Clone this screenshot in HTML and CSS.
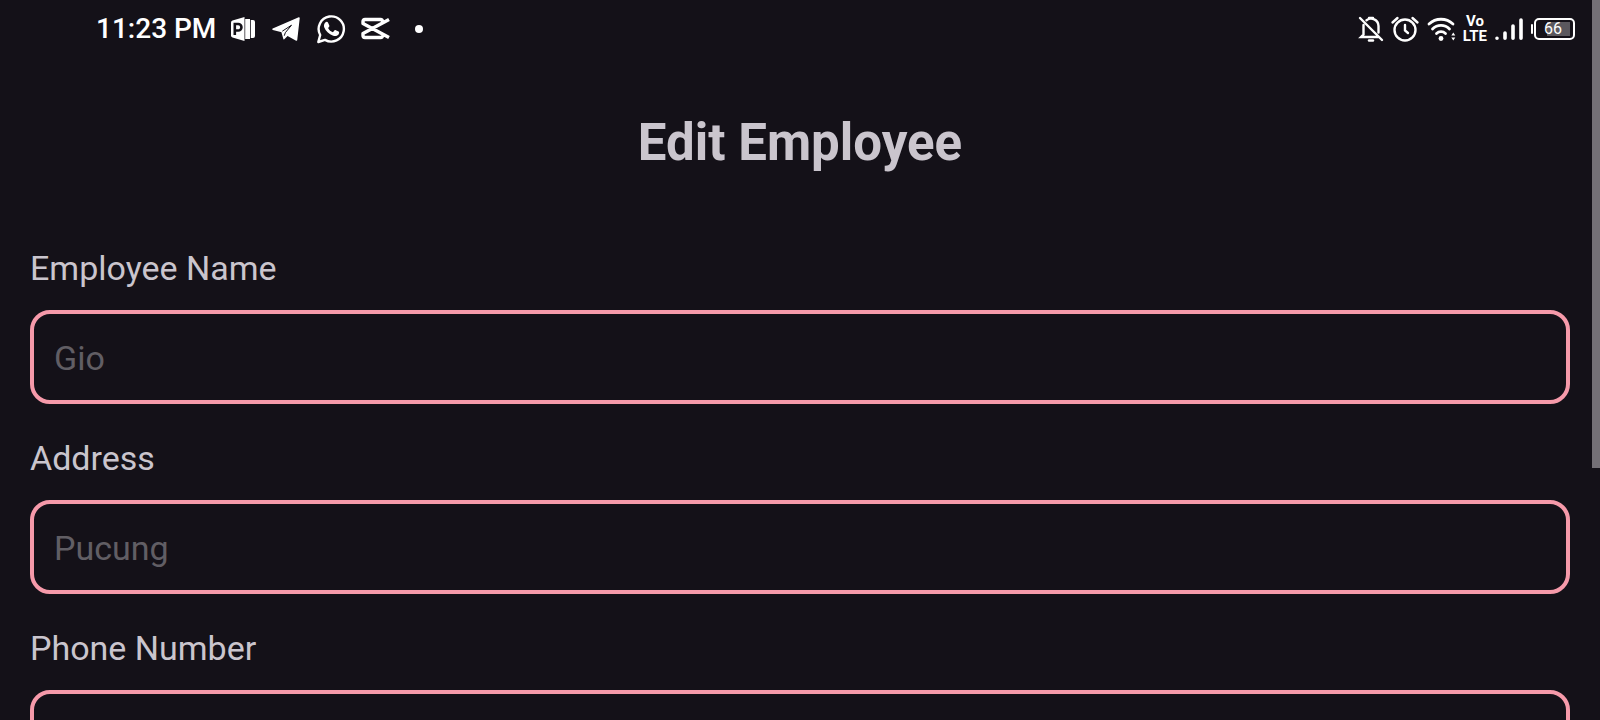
FILE: index.html
```html
<!DOCTYPE html>
<html lang="en">
<head>
<meta charset="utf-8">
<meta name="viewport" content="width=device-width, initial-scale=1">
<title>Edit Employee</title>
<link rel="stylesheet" href="styles.css">
</head>
<body>
<div class="screen">
  <header class="status-bar">
    <div class="status-left">
      <time class="clock">11:23 PM</time>
      <div class="notifications">
        <svg width="26" height="26" viewBox="0 0 26 26" aria-hidden="true">
          <path fill="#fff" d="M2.500 4.500 14.500 1v24l-12-3.500Q1 21 1 19.500v-13Q1 5 2.500 4.500z"/>
          <path fill="#fff" d="M15.200 3h4.800v20h-4.800zM20.800 4H23q2 0 2 2v14q0 2-2 2h-2.200z"/>
          <path fill="none" stroke="#141118" stroke-width="2.600" d="M4.800 19V8h3.400a3 3 0 0 1 0 6.500H5"/>
        </svg>
        <svg width="30" height="26" viewBox="0 0 30 26" aria-hidden="true">
          <path fill="#fff" stroke="#fff" stroke-width="1.500" stroke-linejoin="round" d="M2 13.200 28 2l-2.500 22-9-5-3.500 3.600-2-7z"/>
          <path fill="none" stroke="#141118" stroke-width="1" d="m11.300 15.200 9.200-6-6.200 7.500-1 3"/>
        </svg>
        <svg width="30" height="30" viewBox="0 0 30 30" aria-hidden="true">
          <path fill="none" stroke="#fff" stroke-width="2.400" stroke-linejoin="round" d="m2.300 28 1.900-7A12.600 12.600 0 1 1 9 25.900z"/>
          <path fill="#fff" d="M9.300 8.500c.9-1 2.300-.9 2.800.2l1.200 2.700c.3.800-.2 1.500-1.200 2.500 1.100 2.100 2.700 3.500 4.800 4.300l1.500-1.700c.4-.5.900-.5 1.400-.3l2.800 1.400c.8.400.6 1.700.1 2.600-1 1.700-3.400 2.200-5.500 1.500-4.500-1.500-7.500-4.500-9-8.400-.6-1.800-.1-3.700 1.100-4.800z"/>
        </svg>
        <svg width="30" height="26" viewBox="0 0 30 26" aria-hidden="true">
          <path fill="none" stroke="#fff" stroke-width="3.400" stroke-linejoin="round" d="M21.500 6.500V5.500q0-2-2-2H4q-2 0-2 2v2L28 21.500M28 3.500 2 17.500v2q0 2 2 2h15.500q2 0 2-2v-1"/>
        </svg>
        <svg width="8" height="8" viewBox="0 0 8 8" aria-hidden="true"><circle cx="4" cy="4" r="4" fill="#fff"/></svg>
      </div>
    </div>
    <div class="status-right">
      <div class="alerts">
        <svg width="26" height="28" viewBox="0 0 26 28" fill="none" stroke="#fff" stroke-width="2.400" stroke-linecap="round" aria-hidden="true">
          <path d="m2 3 22 22M5.500 10v9.500L3 22h17.500M8.500 5.200A7.500 7.500 0 0 1 20.500 11v6.500M11 3h4"/>
          <path d="M11 25.500h4"/>
        </svg>
        <svg width="30" height="28" viewBox="0 0 30 28" fill="none" stroke="#fff" stroke-width="2.400" stroke-linecap="round" aria-hidden="true">
          <circle cx="15" cy="15" r="10.500"/><path d="M15 10v5.500l3 2.500M2.500 7.500l5-4.500M27.500 7.500l-5-4.500"/>
        </svg>
        <svg width="30" height="28" viewBox="0 0 30 28" fill="none" stroke="#fff" stroke-width="2.800" stroke-linecap="round" aria-hidden="true">
          <path d="M3 9a17.500 17.500 0 0 1 24 0M6.500 14a12 12 0 0 1 17 0M10.500 18.500a6.500 6.500 0 0 1 9 0"/>
          <circle cx="15" cy="23.500" r="2.400" fill="#fff" stroke="none"/>
          <path fill="#fff" stroke="none" d="m25.300 20.500 2-3 2 3zM25.300 22.500h4l-2 3z"/>
        </svg>
      </div>
      <span class="volte"><span>Vo</span><span>LTE</span></span>
      <svg width="30" height="24" viewBox="0 0 30 24" stroke="#fff" stroke-width="3.600" stroke-linecap="round" aria-hidden="true">
        <path d="M3 21.200v.1M11 21.200V16M19 21.200V9M27 21.200V3"/>
      </svg>
      <span class="battery"><span class="battery-cap"></span><span class="battery-body">66</span></span>
    </div>
  </header>

  <main class="content">
    <h1 class="title">Edit Employee</h1>
    <form class="form">
      <div class="field">
        <label class="label" for="name">Employee Name</label>
        <input class="input" id="name" type="text" placeholder="Gio">
      </div>
      <div class="field">
        <label class="label" for="address">Address</label>
        <input class="input" id="address" type="text" placeholder="Pucung">
      </div>
      <div class="field">
        <label class="label" for="phone">Phone Number</label>
        <input class="input" id="phone" type="tel">
      </div>
    </form>
  </main>
  <div class="scroll-thumb"></div>
</div>
</body>
</html>
```
FILE: styles.css
```css
* {
  box-sizing: border-box;
}

body {
  margin: 0;
  background: #141118;
  color: #cac5cd;
  font-family: Roboto, "Noto Sans", sans-serif;
}

.screen {
  position: relative;
  height: 100vh;
  overflow: hidden;
}

.status-bar {
  display: flex;
  justify-content: space-between;
  align-items: center;
  height: 58px;
  padding: 0 25px 0 96px;
  color: #fff;
}

.status-left,
.notifications,
.status-right,
.alerts,
.battery {
  display: flex;
  align-items: center;
}

.status-left {
  gap: 14px;
}

.clock {
  font-size: 28px;
  font-weight: 500;
  line-height: 32px;
}

.notifications {
  gap: 15px;
}

.notifications svg:last-child {
  margin-left: 9px;
}

.alerts {
  gap: 6px;
}

.status-right {
  gap: 7px;
}

.volte {
  display: flex;
  flex-direction: column;
  align-items: center;
  font-size: 15px;
  font-weight: 700;
  line-height: 15px;
}

.battery {
  gap: 1px;
}

.battery-cap {
  width: 2px;
  height: 10px;
  border-radius: 1px;
  background: #fff;
}

.battery-body {
  width: 41px;
  height: 22px;
  padding-right: 3px;
  border: 2px solid #fff;
  border-radius: 5px;
  background: linear-gradient(to left, transparent 3px, #5b585e 3px 26px, transparent 26px);
  background-size: 100% 14px;
  background-position: center;
  background-repeat: no-repeat;
  font-size: 16px;
  line-height: 18px;
  text-align: center;
}

.content {
  padding: 55px 30px 0;
}

.title {
  margin: 0;
  font-size: 51px;
  font-weight: 700;
  line-height: 60px;
  text-align: center;
}

.form {
  display: flex;
  flex-direction: column;
  gap: 34px;
  margin-top: 75px;
}

.field {
  display: flex;
  flex-direction: column;
  gap: 22px;
}

.label {
  font-size: 34px;
  line-height: 40px;
}

.input {
  width: 100%;
  height: 94px;
  padding: 2px 20px 0;
  border: 4px solid #f69aaa;
  border-radius: 20px;
  outline: none;
  background: transparent;
  color: inherit;
  font: inherit;
  font-size: 34px;
}

.input::placeholder {
  color: #615e64;
  opacity: 1;
}

.scroll-thumb {
  position: absolute;
  top: 0;
  right: 0;
  width: 8px;
  height: 65%;
  background: #747076;
}
```
